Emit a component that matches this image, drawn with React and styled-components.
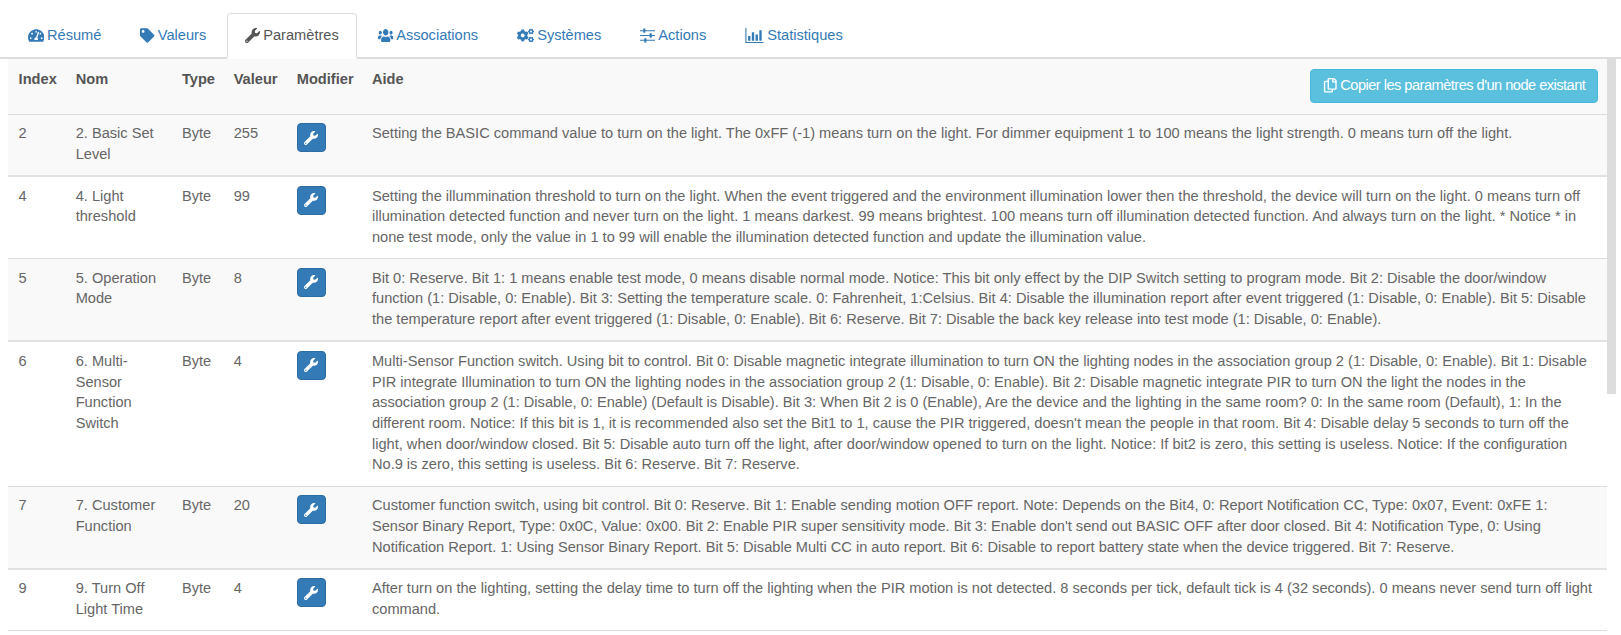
import React from "react";
import styled, { createGlobalStyle } from "styled-components";
import {
  FaTachometerAlt,
  FaTag,
  FaWrench,
  FaUsers,
  FaCogs,
  FaRegCopy
} from "react-icons/fa";

const GlobalStyle = createGlobalStyle`
  body {
    margin: 0;
    background: #fff;
    font-family: "Liberation Sans", Arial, sans-serif;
    font-size: 14.62px;
    line-height: 20.7px;
    color: #666;
  }
`;

// fa-sliders, thinner than the one in react-icons
const SlidersIcon = () => (
  <svg viewBox="0 0 14 13" fill="currentColor">
    <path d="M0 1.5h14v1H0zM0 6h14v1H0zM0 10.5h14v1H0z" />
    <path d="M3 0h2v4H3zM9 4.5h2v4H9zM4 9h2v4H4z" />
  </svg>
);

// fa-bar-chart, the bars stand on the axis
const ChartIcon = () => (
  <svg viewBox="0 0 17 14" fill="currentColor">
    <path d="M0 0h1v13h16v1H0z" />
    <path d="M2.5 7.5h2.2V12H2.5zM6 4h2.2v8H6zM9.5 6h2.2v6H9.5zM13 2h2.2v10H13z" />
  </svg>
);

const tabs = [
  { label: "Résumé", icon: <FaTachometerAlt />, iconWidth: 16.4 },
  { label: "Valeurs", icon: <FaTag />, iconWidth: 14.4 },
  { label: "Paramètres", icon: <FaWrench />, iconWidth: 15, active: true },
  {
    label: "Associations",
    icon: <FaUsers preserveAspectRatio="none" />,
    iconWidth: 15.4
  },
  { label: "Systèmes", icon: <FaCogs />, iconWidth: 17 },
  { label: "Actions", icon: <SlidersIcon />, iconWidth: 15 },
  { label: "Statistiques", icon: <ChartIcon />, iconWidth: 19 }
];

const rows = [
  {
    index: "2",
    name: "2. Basic Set Level",
    value: "255",
    help: "Setting the BASIC command value to turn on the light. The 0xFF (-1) means turn on the light. For dimmer equipment 1 to 100 means the light strength. 0 means turn off the light."
  },
  {
    index: "4",
    name: "4. Light threshold",
    value: "99",
    help: "Setting the illummination threshold to turn on the light. When the event triggered and the environment illumination lower then the threshold, the device will turn on the light. 0 means turn off illumination detected function and never turn on the light. 1 means darkest. 99 means brightest. 100 means turn off illumination detected function. And always turn on the light. * Notice * in none test mode, only the value in 1 to 99 will enable the illumination detected function and update the illumination value."
  },
  {
    index: "5",
    name: "5. Operation Mode",
    value: "8",
    help: "Bit 0: Reserve. Bit 1: 1 means enable test mode, 0 means disable normal mode. Notice: This bit only effect by the DIP Switch setting to program mode. Bit 2: Disable the door/window function (1: Disable, 0: Enable). Bit 3: Setting the temperature scale. 0: Fahrenheit, 1:Celsius. Bit 4: Disable the illumination report after event triggered (1: Disable, 0: Enable). Bit 5: Disable the temperature report after event triggered (1: Disable, 0: Enable). Bit 6: Reserve. Bit 7: Disable the back key release into test mode (1: Disable, 0: Enable)."
  },
  {
    index: "6",
    name: "6. Multi-Sensor Function Switch",
    value: "4",
    help: "Multi-Sensor Function switch. Using bit to control. Bit 0: Disable magnetic integrate illumination to turn ON the lighting nodes in the association group 2 (1: Disable, 0: Enable). Bit 1: Disable PIR integrate Illumination to turn ON the lighting nodes in the association group 2 (1: Disable, 0: Enable). Bit 2: Disable magnetic integrate PIR to turn ON the light the nodes in the association group 2 (1: Disable, 0: Enable) (Default is Disable). Bit 3: When Bit 2 is 0 (Enable), Are the device and the lighting in the same room? 0: In the same room (Default), 1: In the different room. Notice: If this bit is 1, it is recommended also set the Bit1 to 1, cause the PIR triggered, doesn't mean the people in that room. Bit 4: Disable delay 5 seconds to turn off the light, when door/window closed. Bit 5: Disable auto turn off the light, after door/window opened to turn on the light. Notice: If bit2 is zero, this setting is useless. Notice: If the configuration No.9 is zero, this setting is useless. Bit 6: Reserve. Bit 7: Reserve."
  },
  {
    index: "7",
    name: "7. Customer Function",
    value: "20",
    help: "Customer function switch, using bit control. Bit 0: Reserve. Bit 1: Enable sending motion OFF report. Note: Depends on the Bit4, 0: Report Notification CC, Type: 0x07, Event: 0xFE 1:\nSensor Binary Report, Type: 0x0C, Value: 0x00. Bit 2: Enable PIR super sensitivity mode. Bit 3: Enable don't send out BASIC OFF after door closed. Bit 4: Notification Type, 0: Using\nNotification Report. 1: Using Sensor Binary Report. Bit 5: Disable Multi CC in auto report. Bit 6: Disable to report battery state when the device triggered. Bit 7: Reserve."
  },
  {
    index: "9",
    name: "9. Turn Off Light Time",
    value: "4",
    help: "After turn on the lighting, setting the delay time to turn off the lighting when the PIR motion is not detected. 8 seconds per tick, default tick is 4 (32 seconds). 0 means never send turn off light command."
  }
];

const NavTabs = styled.ul`
  display: flex;
  list-style: none;
  margin: 0;
  padding: 13px 0 0 9.6px;
  border-bottom: 2px solid #ddd;
`;

const Tab = styled.li`
  display: flex;
  align-items: center;
  gap: 3px;
  height: 43px;
  margin-right: 3px;
  margin-bottom: -2px;
  padding: 0 17px;
  color: ${props => (props.$active ? "#555" : "#337ab7")};
  background: ${props => (props.$active ? "#fff" : "transparent")};
  border: 1px solid ${props => (props.$active ? "#ddd" : "transparent")};
  border-bottom: 2px solid ${props => (props.$active ? "#fff" : "transparent")};
  border-radius: 4px 4px 0 0;
`;

const TabIcon = styled.span`
  display: flex;
  flex: none;
  width: ${props => props.$width}px;
  svg {
    width: 100%;
    height: 15px;
  }
`;

const Content = styled.div`
  display: flex;
  align-items: flex-start;
  padding-left: 8px;
`;

const ParamTable = styled.table`
  width: 1599px;
  flex: none;
  table-layout: fixed;
  border-collapse: collapse;
`;

const HeadRow = styled.tr`
  height: 55px;
  background: #f9f9f9;
  border-bottom: 1px solid #ddd;
`;

const Row = styled.tr`
  background: ${props => (props.$striped ? "#f9f9f9" : "#fff")};
  border-bottom: ${props => (props.$striped ? "2px solid #e2e2e2" : "1px solid #ddd")};
`;

const HeadCell = styled.th`
  box-sizing: border-box;
  width: ${props => props.$width}px;
  padding: 9.5px 0 9.5px 8.3px;
  text-align: left;
  vertical-align: top;
  font-weight: bold;
  color: #555;
  white-space: nowrap;
  &:first-child {
    padding-left: 10.6px;
  }
`;

const Cell = styled.td`
  padding: 8.5px 8.3px 10.6px;
  vertical-align: top;
  white-space: pre-line;
  &:first-child {
    padding-left: 10.6px;
  }
`;

const HeadInner = styled.div`
  display: flex;
  justify-content: space-between;
  align-items: flex-start;
`;

const CopyButton = styled.button`
  display: flex;
  align-items: center;
  justify-content: center;
  gap: 3px;
  width: 288px;
  height: 34px;
  margin: 0 9px 0 0;
  padding: 0;
  font: inherit;
  font-weight: normal;
  white-space: nowrap;
  letter-spacing: -0.52px;
  color: #fff;
  background: #5bc0de;
  border: 1px solid #46b8da;
  border-radius: 4px;
`;

const EditButton = styled.button`
  display: flex;
  align-items: center;
  justify-content: center;
  width: 29px;
  height: 29px;
  padding: 0;
  font-size: 14px;
  color: #fff;
  background: #337ab7;
  border: 1px solid #2e6da4;
  border-radius: 4px;
`;

const ScrollThumb = styled.div`
  flex: none;
  width: 9px;
  height: 335px;
  background: #ddd;
`;

export default function App() {
  return (
    <>
      <GlobalStyle />
      <NavTabs>
        {tabs.map(tab => (
          <Tab key={tab.label} $active={tab.active}>
            <TabIcon $width={tab.iconWidth}>{tab.icon}</TabIcon>
            {tab.label}
          </Tab>
        ))}
      </NavTabs>
      <Content>
        <ParamTable>
          <thead>
            <HeadRow>
              <HeadCell $width={59.4}>Index</HeadCell>
              <HeadCell $width={106.3}>Nom</HeadCell>
              <HeadCell $width={51.7}>Type</HeadCell>
              <HeadCell $width={63.1}>Valeur</HeadCell>
              <HeadCell $width={75.2}>Modifier</HeadCell>
              <HeadCell>
                <HeadInner>
                  Aide
                  <CopyButton>
                    <FaRegCopy />
                    Copier les paramètres d'un node existant
                  </CopyButton>
                </HeadInner>
              </HeadCell>
            </HeadRow>
          </thead>
          <tbody>
            {rows.map((row, i) => (
              <Row key={row.index} $striped={i % 2 === 0}>
                <Cell>{row.index}</Cell>
                <Cell>{row.name}</Cell>
                <Cell>Byte</Cell>
                <Cell>{row.value}</Cell>
                <Cell>
                  <EditButton>
                    <FaWrench />
                  </EditButton>
                </Cell>
                <Cell>{row.help}</Cell>
              </Row>
            ))}
          </tbody>
        </ParamTable>
        <ScrollThumb />
      </Content>
    </>
  );
}
